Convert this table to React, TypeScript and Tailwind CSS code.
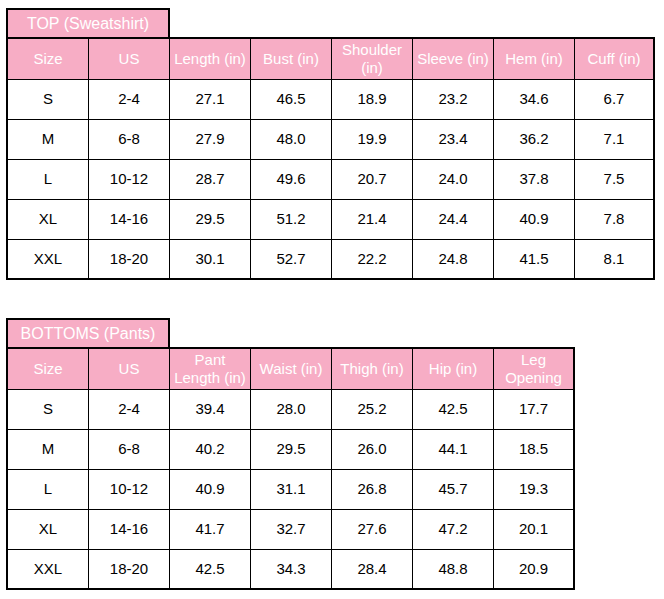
import React from 'react';

type SizeTable = {
  title: string;
  headers: string[];
  rows: string[][];
};

const top: SizeTable = {
  title: 'TOP (Sweatshirt)',
  headers: ['Size', 'US', 'Length (in)', 'Bust (in)', 'Shoulder (in)', 'Sleeve (in)', 'Hem (in)', 'Cuff (in)'],
  rows: [
    ['S', '2-4', '27.1', '46.5', '18.9', '23.2', '34.6', '6.7'],
    ['M', '6-8', '27.9', '48.0', '19.9', '23.4', '36.2', '7.1'],
    ['L', '10-12', '28.7', '49.6', '20.7', '24.0', '37.8', '7.5'],
    ['XL', '14-16', '29.5', '51.2', '21.4', '24.4', '40.9', '7.8'],
    ['XXL', '18-20', '30.1', '52.7', '22.2', '24.8', '41.5', '8.1'],
  ],
};

const bottoms: SizeTable = {
  title: 'BOTTOMS (Pants)',
  headers: ['Size', 'US', 'Pant Length (in)', 'Waist (in)', 'Thigh (in)', 'Hip (in)', 'Leg Opening'],
  rows: [
    ['S', '2-4', '39.4', '28.0', '25.2', '42.5', '17.7'],
    ['M', '6-8', '40.2', '29.5', '26.0', '44.1', '18.5'],
    ['L', '10-12', '40.9', '31.1', '26.8', '45.7', '19.3'],
    ['XL', '14-16', '41.7', '32.7', '27.6', '47.2', '20.1'],
    ['XXL', '18-20', '42.5', '34.3', '28.4', '48.8', '20.9'],
  ],
};

function Cell({ children, first, last }: { children: React.ReactNode; first: boolean; last: boolean }) {
  // border-box: the 1px rule is inside the width, so inner columns are 81 wide
  return (
    <div
      className={
        'flex items-center justify-center text-center px-0.5 ' +
        (first ? 'w-[80px] shrink-0' : last ? 'flex-1 border-l border-black' : 'w-[81px] shrink-0 border-l border-black')
      }
    >
      {children}
    </div>
  );
}

function SizeChart({ table }: { table: SizeTable }) {
  const n = table.headers.length;
  return (
    <div className="ml-[6px]">
      {/* tab with the garment name, sits on top of the grid */}
      <div className="w-[164px] h-[29px] border-2 border-b-0 border-black bg-[#f7adc5] flex items-center justify-center text-[16px] text-white">
        {table.title}
      </div>
      <div className={`border-2 border-black ${n === 8 ? 'w-[649px]' : 'w-[569px]'}`}>
        <div className="flex h-[40px] bg-[#f7adc5] text-white text-[15px] leading-[18px]">
          {table.headers.map((h, i) => (
            <Cell key={h} first={i === 0} last={i === n - 1}>
              {h}
            </Cell>
          ))}
        </div>
        {table.rows.map((row, r) => (
          <div
            key={row[0]}
            className={`flex ${r === table.rows.length - 1 ? 'h-[39px]' : 'h-[40px]'} border-t border-black bg-white text-black text-[15px]`}
          >
            {row.map((v, i) => (
              <Cell key={i} first={i === 0} last={i === n - 1}>
                {v}
              </Cell>
            ))}
          </div>
        ))}
      </div>
    </div>
  );
}

export default function App() {
  return (
    <div className="w-[664px] h-[599px] bg-white pt-[8px] font-['Liberation_Sans',Arial,sans-serif]">
      <SizeChart table={top} />
      <div className="h-[38px]" />
      <SizeChart table={bottoms} />
    </div>
  );
}
